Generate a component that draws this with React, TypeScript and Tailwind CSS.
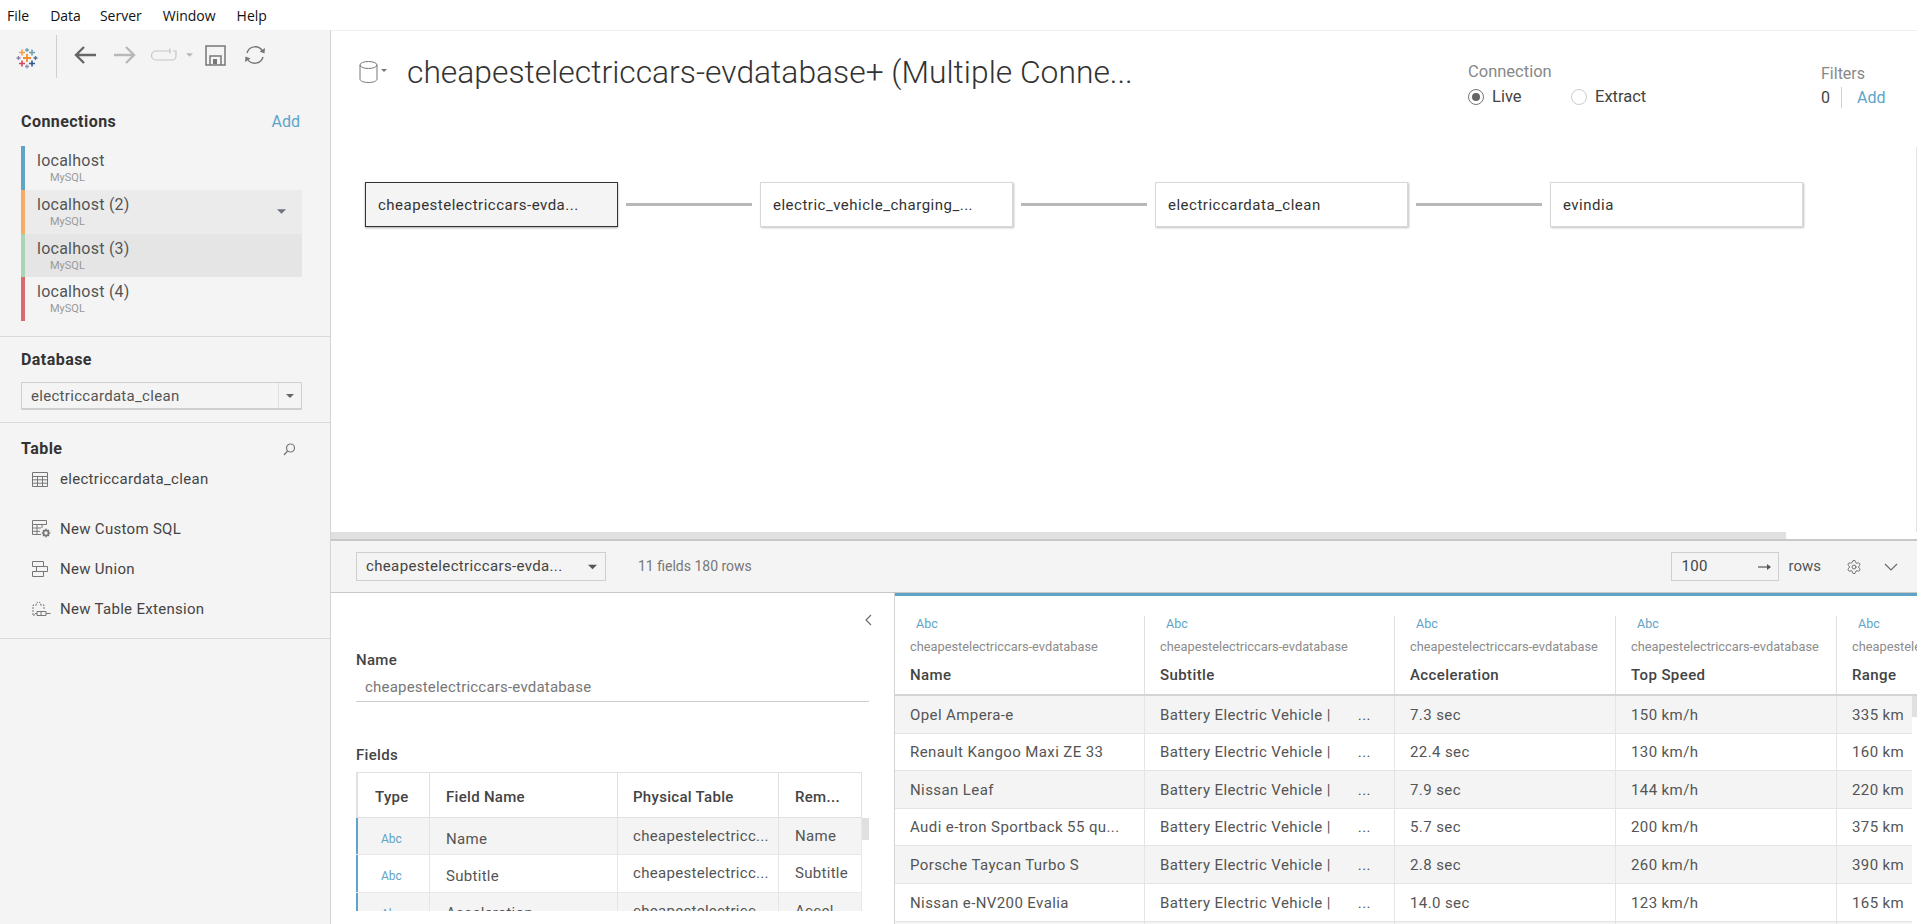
import React from "react";
import { Settings } from "lucide-react";

const Logo = () => {
  const plus = (x: number, y: number, s: number, w: number, c: string) => (
    <path key={`${x}-${y}`} d={`M${x - s} ${y}H${x + s}M${x} ${y - s}V${y + s}`} stroke={c} strokeWidth={w} fill="none" />
  );
  return (
    <svg width="22" height="22" viewBox="0 0 22 22" className="shrink-0">
      {plus(11, 11, 4, 1.8, "#f28e2b")}
      {plus(6, 5.5, 3, 1.6, "#f2a04b")}
      {plus(16, 5.5, 3, 1.6, "#6f9fb5")}
      {plus(6, 16.5, 3, 1.6, "#d8445a")}
      {plus(16, 16.5, 3, 1.6, "#2f5a8f")}
      {plus(11, 3, 2, 1.3, "#6f9fb5")}
      {plus(11, 19.5, 2, 1.3, "#8b8db8")}
      {plus(2.5, 11, 2, 1.3, "#8b7fa8")}
      {plus(19.5, 11, 2, 1.3, "#4f6d9a")}
    </svg>
  );
};

const Caret = ({ c = "#666", w = 10, h = 5 }: { c?: string; w?: number; h?: number }) => (
  <svg width={w} height={h} viewBox="0 0 10 5" className="shrink-0">
    <path d="M0 0H10L5 5Z" fill={c} />
  </svg>
);

const Toolbar = () => (
  <div className="flex h-[55px] items-center">
    <div className="ml-[16px]"><Logo /></div>
    <div className="ml-[18px] h-[43px] w-px self-start mt-[5px] bg-[#cfcfcf]" />
    <svg width="24" height="20" viewBox="0 0 24 20" className="ml-[16px] mt-[-5px]">
      <path d="M23 10H3M11 2L3 10L11 18" fill="none" stroke="#666" strokeWidth="2.4" />
    </svg>
    <svg width="24" height="20" viewBox="0 0 24 20" className="ml-[16px] mt-[-5px]">
      <path d="M1 10H21M13 2L21 10L13 18" fill="none" stroke="#b8b8b8" strokeWidth="2.4" />
    </svg>
    <svg width="26" height="14" viewBox="0 0 26 14" className="ml-[14px] mt-[-5px]">
      <path d="M19 3H5A4 4 0 0 0 5 12H21A4 4 0 0 0 25 8V3H22M19 0.5V5.5" fill="none" stroke="#c4c4c4" strokeWidth="1.2" />
    </svg>
    <div className="ml-[9px] mt-[-5px]"><Caret c="#b8b8b8" w={7} h={4} /></div>
    <svg width="21" height="21" viewBox="0 0 21 21" className="ml-[12px] mt-[-5px]">
      <path d="M1 1H20V20H1ZM5 20V11H16V20" fill="none" stroke="#777" strokeWidth="1.5" />
      <rect x="8" y="14" width="4" height="5" fill="#777" />
    </svg>
    <svg width="22" height="22" viewBox="0 0 22 22" className="ml-[18px] mt-[-5px]">
      <path d="M3 9A8.5 8.5 0 0 1 18.5 7M19 13A8.5 8.5 0 0 1 3.5 15" fill="none" stroke="#777" strokeWidth="1.4" />
      <path d="M21 4L20.5 9.5L15.5 7.5ZM1 18L1.5 12.5L6.5 14.5Z" fill="#777" />
    </svg>
  </div>
);

const conns = [
  { n: "localhost", bar: "bg-[#5fa4c6]", bg: "" },
  { n: "localhost (2)", bar: "bg-[#f5ad66]", bg: "bg-[#ebebeb]" },
  { n: "localhost (3)", bar: "bg-[#a9d5b4]", bg: "bg-[#e5e5e5]" },
  { n: "localhost (4)", bar: "bg-[#d9696f]", bg: "" },
];

const TableIcon = () => (
  <svg width="16" height="15" viewBox="0 0 16 15" className="shrink-0">
    <path d="M.5.5H15.5V14.5H.5ZM.5 4.5H15.5M.5 7.8H15.5M.5 11.2H15.5M5.5 4.5V14.5M10.5 4.5V14.5" fill="none" stroke="#777" />
  </svg>
);
const SqlIcon = () => (
  <svg width="19" height="18" viewBox="0 0 19 18" className="shrink-0">
    <path d="M.5.5H14.5V4.5H.5ZM.5 4.5V14.5H9M.5 8H9M.5 11.3H8M5 4.5V14.5M10 4.5V8" fill="none" stroke="#777" />
    <circle cx="14" cy="13" r="2.6" fill="none" stroke="#777" strokeWidth="1.8" />
    <path d="M14 8.5V10M14 16V17.5M9.5 13H11M17 13H18.5M11 10L12 11M17 10L16 11M11 16L12 15M17 16L16 15" stroke="#777" strokeWidth="1.2" />
  </svg>
);
const UnionIcon = () => (
  <svg width="16" height="16" viewBox="0 0 16 16" className="shrink-0">
    <path d="M.5.5H11.5V5.5H.5ZM4.5 5.5H15.5V10.5H4.5ZM.5 10.5H11.5V15.5H.5Z" fill="none" stroke="#777" />
  </svg>
);
const ExtIcon = () => (
  <svg width="19" height="18" viewBox="0 0 19 18" className="shrink-0">
    <path d="M1 15V5H4.5C4 1 9 1 8.5 5H12V9" fill="none" stroke="#777" strokeDasharray="2 1" />
    <path d="M1 15H4" fill="none" stroke="#777" strokeDasharray="2 1" />
    <path d="M5 11.5H14V15.5H5ZM9 11.5V15.5M14 13.5H18.5M3 13.5H5" fill="none" stroke="#777" />
  </svg>
);

const Heading = ({ children }: { children: React.ReactNode }) => (
  <div className="text-[16px] font-bold leading-[18px] tracking-[0.45px] text-[#333]">{children}</div>
);

const sideItem = "flex h-[20px] items-center text-[15px] tracking-[0.3px] text-[#444]";

const Sidebar = () => (
  <aside className="flex w-[331px] shrink-0 flex-col border-r border-[#d4d4d4] bg-[#f4f4f4]">
    <Toolbar />
    <div className="mt-[28px] flex items-center justify-between pl-[21px] pr-[30px]">
      <Heading>Connections</Heading>
      <span className="text-[16px] leading-[18px] text-[#5ca5c9]">Add</span>
    </div>
    <div className="ml-[21px] mt-[15px] w-[281px]">
      {conns.map((c, i) => (
        <div key={c.n} className={`relative flex h-[43.75px] ${c.bg}`}>
          <div className={`w-[4px] shrink-0 ${c.bar}`} />
          <div className="pl-[12px] pt-[6px]">
            <div className="text-[16px] leading-[18px] tracking-[0.25px] text-[#555]">{c.n}</div>
            <div className="ml-[13px] mt-[1px] text-[11px] leading-[14px] text-[#999]">MySQL</div>
          </div>
          {i === 1 && (
            <div className="absolute left-[256px] top-[19px]"><Caret c="#6b7280" w={9} h={5} /></div>
          )}
        </div>
      ))}
    </div>
    <div className="mt-[15px] border-t border-[#d8d8d8] px-[21px] pt-[14px] pb-[12px] pr-[28px]">
      <Heading>Database</Heading>
      <div className="mt-[13px] flex h-[28px] w-[281px] items-center rounded-[1px] border border-[#cfcfcf] border-b-2 bg-[#f4f4f4]">
        <span className="flex-1 pl-[9px] pt-[1px] text-[15px] tracking-[0.3px] text-[#555]">electriccardata_clean</span>
        <span className="flex h-full w-[23px] items-center justify-center border-l border-[#e0e0e0]"><Caret c="#666" w={8} h={4} /></span>
      </div>
    </div>
    <div className="border-t border-[#d8d8d8] pt-[17px] pb-[19px]">
      <div className="flex items-center justify-between pl-[21px] pr-[34px]">
        <Heading>Table</Heading>
        <svg width="13" height="13" viewBox="0 0 13 13">
          <circle cx="7.5" cy="5" r="4" fill="none" stroke="#777" strokeWidth="1.2" />
          <path d="M4.5 8L1 12" stroke="#777" strokeWidth="1.4" />
        </svg>
      </div>
      <div className={`mt-[11px] gap-[12px] pl-[32px] ${sideItem}`}>
        <TableIcon />electriccardata_clean
      </div>
      <div className={`mt-[30px] gap-[9px] pl-[32px] ${sideItem}`}>
        <SqlIcon />New Custom SQL
      </div>
      <div className={`mt-[20px] gap-[12px] pl-[32px] ${sideItem}`}>
        <UnionIcon />New Union
      </div>
      <div className={`mt-[20px] gap-[9px] pl-[32px] ${sideItem}`}>
        <ExtIcon />New Table Extension
      </div>
    </div>
    <div className="border-t border-[#d8d8d8]" />
  </aside>
);

const Card = ({ t, active }: { t: string; active?: boolean }) => (
  <div
    className={`flex h-[45px] w-[253px] shrink-0 items-center border pl-[12px] pt-[1px] text-[15px] tracking-[0.5px] text-[#333] ${
      active
        ? "border-[#333] bg-[#f4f4f4] shadow-[0_1px_2px_rgba(0,0,0,0.35)]"
        : "border-[#d8d8d8] bg-white shadow-[1px_1px_2px_rgba(0,0,0,0.25)]"
    }`}
  >
    {t}
  </div>
);

const Connector = () => (
  <div className="w-[142px] shrink-0 px-[8px]">
    <div className="h-[3px] bg-[#b8b8b8]" />
  </div>
);

const Canvas = () => (
  <div className="flex h-[502px] shrink-0 flex-col border-t border-[#f0f0f0]">
    <div className="flex h-[116px] items-start">
      <div className="ml-[28px] mt-[24px] flex items-center">
        <svg width="19" height="22" viewBox="0 0 19 22">
          <ellipse cx="9.5" cy="4" rx="8.5" ry="3.5" fill="none" stroke="#777" />
          <path d="M1 4V18C1 20 4.5 21.5 9.5 21.5S18 20 18 18V4" fill="none" stroke="#777" />
        </svg>
        <div className="ml-[3px] mr-[20px] mt-[-3px]"><Caret c="#777" w={6} h={3} /></div>
        <div className="text-[31.8px] font-light leading-[34px] text-[#333]">cheapestelectriccars-evdatabase+ (Multiple Conne...</div>
      </div>
      <div className="ml-auto mt-[31px] w-[353px] text-[16.5px]">
        <div className="leading-[20px] text-[#888]">Connection</div>
        <div className="mt-[5px] flex items-center leading-[20px] text-[#444]">
          <span className="flex h-[16px] w-[16px] items-center justify-center rounded-full border border-[#777]">
            <span className="h-[8px] w-[8px] rounded-full bg-[#666]" />
          </span>
          <span className="ml-[8px] w-[79px]">Live</span>
          <span className="h-[16px] w-[16px] rounded-full border border-[#ccc]" />
          <span className="ml-[8px]">Extract</span>
        </div>
      </div>
      <div className="mt-[33px] w-[96px] text-[16px]">
        <div className="leading-[20px] text-[#888]">Filters</div>
        <div className="mt-[3px] flex items-center leading-[20px]">
          <span className="text-[#444]">0</span>
          <span className="ml-[11px] h-[21px] w-px bg-[#d0d0d0]" />
          <span className="ml-[15px] text-[#5ca5c9]">Add</span>
        </div>
      </div>
    </div>
    <div className="flex flex-1 items-start border-r border-[#e4e4e4] pl-[34px] pt-[35px]">
      <div className="flex items-center">
        <Card t="cheapestelectriccars-evda..." active />
        <Connector />
        <Card t="electric_vehicle_charging_..." />
        <Connector />
        <Card t="electriccardata_clean" />
        <Connector />
        <Card t="evindia" />
      </div>
    </div>
  </div>
);

const BottomBar = () => (
  <div className="flex h-[54px] shrink-0 items-center border-t-2 border-b border-t-[#c8c8c8] border-b-[#c8c8c8] bg-[#f4f4f4] pl-[25px] pr-[19px]">
    <div className="flex h-[29px] w-[250px] items-center justify-between border border-[#cfcfcf] pl-[9px] pr-[8px] text-[15px] tracking-[0.35px] text-[#444]">
      cheapestelectriccars-evda...
      <Caret c="#555" w={9} h={6} />
    </div>
    <span className="ml-[32px] text-[14px] text-[#777]">11 fields 180 rows</span>
    <div className="ml-auto flex h-[29px] w-[108px] items-center justify-between border border-[#cfcfcf] pl-[9px] pr-[7px] text-[15px] tracking-[0.3px] text-[#444]">
      100
      <svg width="13" height="8" viewBox="0 0 13 8"><path d="M0 4H12" stroke="#555" strokeWidth="1.2" /><path d="M9 1L13 4L9 7Z" fill="#555" /></svg>
    </div>
    <span className="ml-[9px] text-[15px] text-[#555]">rows</span>
    <Settings size={16} strokeWidth={1.4} color="#666" className="ml-[25px]" />
    <svg width="14" height="8" viewBox="0 0 14 8" className="ml-[22px]"><path d="M1 1L7 7L13 1" fill="none" stroke="#666" strokeWidth="1.1" /></svg>
  </div>
);

const fieldRows = [
  ["Name", "Name"],
  ["Subtitle", "Subtitle"],
  ["Acceleration", "Accel..."],
];

const FieldsPane = () => (
  <div className="w-[564px] shrink-0 border-r border-[#d4d4d4] pl-[25px]">
    <div className="flex h-[39px] w-[516px] justify-end pt-[21px]">
      <svg width="7" height="12" viewBox="0 0 7 12"><path d="M6 1L1 6L6 11" fill="none" stroke="#666" strokeWidth="1.1" /></svg>
    </div>
    <div className="mt-[19px] text-[15px] font-medium leading-[18px] tracking-[0.3px] text-[#444]">Name</div>
    <div className="h-[33px] w-[513px] border-b border-[#cfcfcf] pl-[9px] pt-[9px] text-[15px] leading-[18px] tracking-[0.2px] text-[#777]">cheapestelectriccars-evdatabase</div>
    <div className="mt-[44px] text-[15px] font-medium leading-[18px] tracking-[0.3px] text-[#444]">Fields</div>
    <div className="mt-[8px] h-[139px] w-[513px] overflow-hidden text-[15px] tracking-[0.3px]">
      <div className="flex h-[46px] w-[506px] border-t border-b border-r border-[#e0e0e0] font-medium text-[#444]">
        <div className="w-[2px] shrink-0 bg-[#e0e0e0]" />
        <div className="flex w-[72px] items-center border-r border-[#e0e0e0] pl-[17px] pt-[4px]">Type</div>
        <div className="flex w-[188px] items-center border-r border-[#e0e0e0] pl-[16px] pt-[4px]">Field Name</div>
        <div className="flex w-[161px] items-center border-r border-[#e0e0e0] pl-[15px] pt-[4px]">Physical Table</div>
        <div className="flex flex-1 items-center pl-[16px] pt-[4px]">Rem...</div>
      </div>
      <div className="relative">
        {fieldRows.map((r, i) => (
          <div key={r[0]} className={`flex h-[37.3px] w-[506px] border-b border-r border-[#e8e8e8] text-[#555] ${i % 2 === 0 ? "bg-[#f4f4f4]" : "bg-white"}`}>
            <div className="w-[2px] shrink-0 bg-[#5fa4c6]" />
            <div className="flex w-[72px] items-center border-r border-[#e4e4e4] pl-[23px] pt-[6px] text-[12px] tracking-[0] text-[#5fa4c6]">Abc</div>
            <div className="flex w-[188px] items-center border-r border-[#e4e4e4] pl-[16px] pt-[6px]">{r[0]}</div>
            <div className="flex w-[161px] items-start border-r border-[#e4e4e4] pl-[15px] pt-[7px]">cheapestelectricc...</div>
            <div className="flex flex-1 items-start pl-[16px] pt-[7px]">{r[1]}</div>
          </div>
        ))}
        <div className="absolute left-[506px] top-0 h-[22px] w-[7px] bg-[#e0e0e0]" />
      </div>
    </div>
  </div>
);

const cols = [
  { t: "Name", w: "w-[250px]", src: "cheapestelectriccars-evdatabase" },
  { t: "Subtitle", w: "w-[250px]", src: "cheapestelectriccars-evdatabase" },
  { t: "Acceleration", w: "w-[221px]", src: "cheapestelectriccars-evdatabase" },
  { t: "Top Speed", w: "w-[221px]", src: "cheapestelectriccars-evdatabase" },
  { t: "Range", w: "w-[80px]", src: "cheapestelectriccars-evdatabase" },
];

const rows = [
  ["Opel Ampera-e", "7.3 sec", "150 km/h", "335 km"],
  ["Renault Kangoo Maxi ZE 33", "22.4 sec", "130 km/h", "160 km"],
  ["Nissan Leaf", "7.9 sec", "144 km/h", "220 km"],
  ["Audi e-tron Sportback 55 qu...", "5.7 sec", "200 km/h", "375 km"],
  ["Porsche Taycan Turbo S", "2.8 sec", "260 km/h", "390 km"],
  ["Nissan e-NV200 Evalia", "14.0 sec", "123 km/h", "165 km"],
  ["", "", "", ""],
];

const cell = "flex shrink-0 items-center border-r border-[#e4e4e4] pl-[15px] pt-[1px]";

const DataGrid = () => (
  <div className="relative min-w-0 flex-1 overflow-hidden">
    <div className="flex h-[103px] border-b-2 border-[#d4d4d4]">
      {cols.map((c, i) => (
        <div key={c.t} className={`${c.w} shrink-0 overflow-hidden border-t-[3px] border-[#5fa4c6]`}>
          <div className={`h-full border-r pl-[15px] ${i < 4 ? "border-[#e0e0e0]" : "border-transparent"}`}>
            <div className="ml-[6px] mt-[20px] text-[12.5px] leading-[16px] text-[#5fa4c6]">Abc</div>
            <div className="mt-[7px] whitespace-nowrap text-[12.8px] leading-[16px] text-[#8c8c8c]">{c.src}</div>
            <div className="mt-[11px] text-[15px] font-medium leading-[18px] tracking-[0.4px] text-[#444]">{c.t}</div>
          </div>
        </div>
      ))}
    </div>
    {rows.map((r, i) => (
      <div key={i} className={`flex h-[37.6px] w-[1017px] border-b border-[#e4e4e4] text-[15px] tracking-[0.4px] text-[#555] ${i % 2 === 0 ? "bg-[#f4f4f4]" : "bg-white"}`}>
        <div className={`w-[250px] ${cell}`}>{r[0]}</div>
        <div className={`w-[250px] ${cell}`}>
          {r[0] && <>Battery Electric Vehicle | <span className="ml-[27px]">...</span></>}
        </div>
        <div className={`w-[221px] ${cell}`}>{r[1]}</div>
        <div className={`w-[221px] ${cell}`}>{r[2]}</div>
        <div className="flex flex-1 items-center pl-[15px] pt-[1px]">{r[3]}</div>
      </div>
    ))}
    <div className="absolute right-0 top-[103px] h-[21px] w-[5px] bg-[#e0e0e0]" />
  </div>
);

export default function App() {
  return (
    <div className="flex h-[924px] w-[1917px] flex-col overflow-hidden bg-white font-[Roboto,sans-serif]">
      <nav className="flex h-[30px] shrink-0 items-center bg-white pt-[1px] font-['Open_Sans',sans-serif] text-[14px] text-[#111]">
        <span className="ml-[7px]">File</span>
        <span className="ml-[21px]">Data</span>
        <span className="ml-[19px]">Server</span>
        <span className="ml-[21px]">Window</span>
        <span className="ml-[21px]">Help</span>
      </nav>
      <div className="flex min-h-0 flex-1">
        <Sidebar />
        <main className="flex min-w-0 flex-1 flex-col">
          <Canvas />
          <div className="flex h-[7px] shrink-0">
            <div className="w-[1455px] bg-[#e0e0e0]" />
          </div>
          <BottomBar />
          <div className="flex min-h-0 flex-1">
            <FieldsPane />
            <DataGrid />
          </div>
        </main>
      </div>
    </div>
  );
}
